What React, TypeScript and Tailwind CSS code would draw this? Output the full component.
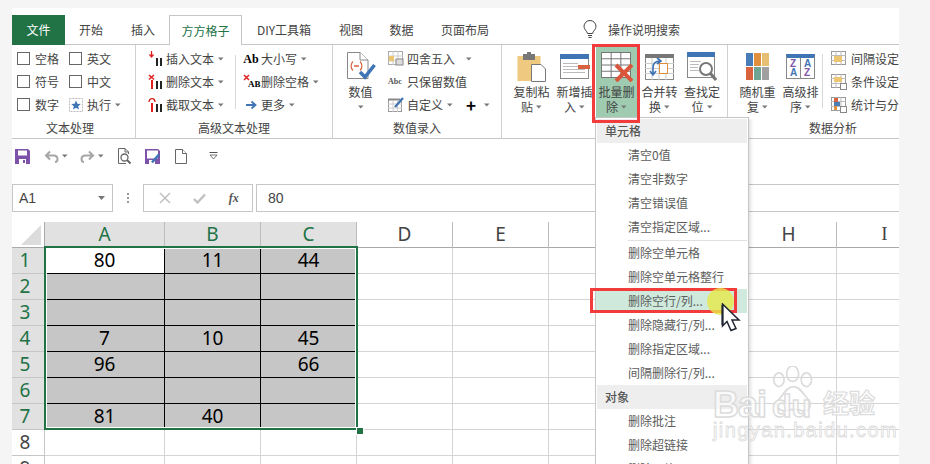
import React from "react";

const CJK = "font-['Noto_Sans_CJK_SC','Noto_Sans',sans-serif]";

function Caret({ className = "" }: { className?: string }) {
  return (
    <svg width="6" height="4" viewBox="0 0 6 4" className={`inline-block shrink-0 ${className}`}>
      <path d="M0 0.5H5.5L2.75 3.5Z" fill="#777" />
    </svg>
  );
}

function Check({ label, mr = "" }: { label: string; mr?: string }) {
  return (
    <div className={`flex items-center h-[23px] w-[52px] ${mr}`}>
      <span className="w-[13px] h-[13px] border border-[#666] mr-[5px] bg-white shrink-0" />
      <span>{label}</span>
    </div>
  );
}

function Bars({ color = "#000" }: { color?: string }) {
  return (
    <>
      <rect x="9" y="7" width="2" height="8" fill="#222" />
      <rect x="13" y="7" width="2" height="8" fill="#222" />
      <rect x="4" y="6" width="2" height="9" fill={color} />
    </>
  );
}

function SmallRow({ icon, label, caret = true, gap = "ml-[3px]" }: { icon: React.ReactNode; label: string; caret?: boolean; gap?: string }) {
  return (
    <div className="flex items-center h-[23px]">
      <span className="w-[16px] h-[16px] flex items-center justify-center shrink-0">{icon}</span>
      <span className={`${gap} whitespace-nowrap`}>{label}</span>
      {caret && <Caret className="ml-[4px]" />}
    </div>
  );
}

function Large({ icon, l1, l2, w = "w-[43px]", active = false }: { icon: React.ReactNode; l1: string; l2: string; w?: string; active?: boolean }) {
  return (
    <div className={`${w} flex flex-col items-center pt-[6px] h-[73px] ${active ? "bg-[#9fcbb0]" : ""}`}>
      <div className="h-[31px] w-[32px] flex items-center justify-center">{icon}</div>
      <div className="leading-[15px] mt-[2px] whitespace-nowrap text-center">{l1}</div>
      <div className="leading-[15px] flex items-center justify-center gap-[3px] h-[15px]">
        {l2}
        <Caret />
      </div>
    </div>
  );
}

function Group({ width, label, children, sep = true, labelClass = "" }: { width: string; label: string; children: React.ReactNode; sep?: boolean; labelClass?: string }) {
  return (
    <div className={`${width} shrink-0 h-full flex flex-col relative ${sep ? "border-r border-[#d0d0d0]" : ""}`}>
      <div className="flex-1 flex min-h-0">{children}</div>
      <div className={`h-[20px] leading-[20px] text-center pb-[1px] text-[#444] ${labelClass}`}>{label}</div>
    </div>
  );
}

const GridLines = ({ x, y, w, h, stroke = "#8a8a8a" }: { x: number; y: number; w: number; h: number; stroke?: string }) => {
  const cw = w / 3;
  const ch = h / 4;
  return (
    <g stroke={stroke} strokeWidth="1" fill="none">
      <rect x={x + 0.5} y={y + 0.5} width={w} height={h} />
      {[1, 2].map((i) => (
        <path key={i} d={`M${x + 0.5 + cw * i} ${y}V${y + h}`} />
      ))}
      {[1, 2, 3].map((i) => (
        <path key={i} d={`M${x} ${y + 0.5 + ch * i}H${x + w}`} />
      ))}
    </g>
  );
};

const Tiny = ({ kind }: { kind: number }) => (
  <svg width="16" height="16" viewBox="0 0 16 16">
    <rect x="0.5" y="0.5" width="14" height="13" fill="#fff" stroke="#999" />
    <path d="M0 4.5H15M0 9.5H15M5 0V14M10 0V14" stroke="#bbb" />
    {kind === 0 && <rect x="3" y="5" width="8" height="6" fill="#eec673" />}
    {kind === 1 && <rect x="3" y="3" width="8" height="5" fill="#eec673" />}
    {kind === 2 && (
      <>
        <rect x="3" y="1" width="4" height="4" fill="#d9623f" />
        <rect x="3" y="5" width="6" height="4" fill="#4a7db8" />
        <rect x="3" y="9" width="3" height="4" fill="#e08f3c" />
      </>
    )}
    {kind > 0 && <rect x="9.5" y="9.5" width="6" height="6" fill="#fff" stroke="#888" />}
  </svg>
);

const rows = [
  ["80", "11", "44"],
  ["", "", ""],
  ["", "", ""],
  ["7", "10", "45"],
  ["96", "", "66"],
  ["", "", ""],
  ["81", "40", ""],
];

const menu1 = ["清空0值", "清空非数字", "清空错误值", "清空指定区域..."];
const menu2 = ["删除空单元格", "删除空单元格整行", "删除空行/列...", "删除隐藏行/列...", "删除指定区域...", "间隔删除行/列..."];
const menu3 = ["删除批注", "删除超链接", "删除图片"];

function MenuItem({ t, on = false }: { t: string; on?: boolean }) {
  return (
    <div className={`h-[24px] leading-[24px] pl-[32px] mr-px whitespace-nowrap text-[#5c5c5c] ${on ? "bg-[#cfeadd]" : ""}`}>{t}</div>
  );
}

export default function App() {
  return (
    <div className={`w-[930px] h-[464px] bg-[#f5f5f5] pl-[12px] pt-[8px] overflow-hidden text-[12px] text-[#444] ${CJK}`}>
      <div className="relative w-[887px] h-[456px] bg-white overflow-hidden">
        {/* tabs */}
        <div className="h-[37px] pt-[7px] flex items-stretch border-b border-[#c6c6c6] text-[12px]">
          <div className="w-[53px] bg-[#217346] text-white flex items-center justify-center -mb-[1px]">文件</div>
          <div className="w-[52px] flex items-center justify-center">开始</div>
          <div className="w-[52px] flex items-center justify-center">插入</div>
          <div className="w-[73px] -mb-[1px] bg-white border border-b-0 border-[#c6c6c6] text-[#217346] flex items-center justify-center">方方格子</div>
          <div className="w-[84px] flex items-center justify-center">DIY工具箱</div>
          <div className="w-[50px] flex items-center justify-center">视图</div>
          <div className="w-[51px] flex items-center justify-center">数据</div>
          <div className="w-[76px] flex items-center justify-center">页面布局</div>
          <div className="ml-[79px] flex items-center">
            <svg width="16" height="19" viewBox="0 0 16 19" fill="none" stroke="#444">
              <path d="M5.5 13.5C5 11 2 9.5 2 6.5a6 6 0 0 1 12 0c0 3-3 4.500-3.500 7Z" />
              <path d="M6 15.500H10M6.500 17.500H9.500" />
            </svg>
            <span className="ml-[10px]">操作说明搜索</span>
          </div>
        </div>

        {/* ribbon */}
        <div className="h-[94px] flex border-b border-[#c6c6c6]">
          <Group width="w-[124px]" label="文本处理" labelClass="pr-[7px]">
            <div className="pl-[5px] pt-[2px] flex">
              <div>
                <Check label="空格" />
                <Check label="符号" />
                <Check label="数字" />
              </div>
              <div>
                <Check label="英文" />
                <Check label="中文" />
                <div className="flex items-center h-[23px]">
                  <svg width="14" height="14" viewBox="0 0 14 14" className="mr-[4px]">
                    <rect x="0.500" y="0.500" width="13" height="13" fill="#fff" stroke="#bbb" strokeDasharray="2 1" />
                    <path d="M7 2.500L8.400 5.700L11.800 6L9.200 8.200L10 11.500L7 9.800L4 11.500L4.800 8.200L2.200 6L5.600 5.700Z" fill="#3f74b5" />
                  </svg>
                  <span>执行</span>
                  <Caret className="ml-[4px]" />
                </div>
              </div>
            </div>
          </Group>
          <Group width="w-[197px]" label="高级文本处理">
            <div className="pl-[11px] pt-[2px] flex">
              <div className="w-[88px]">
                <SmallRow
                  label="插入文本"
                  icon={
                    <svg width="16" height="16" viewBox="0 0 16 16">
                      <path d="M4.500 0V5M2.500 3.500L4.500 6L6.500 3.500" stroke="#e02020" fill="none" strokeWidth="1.300" />
                      <rect x="9" y="7" width="2" height="8" fill="#222" />
                      <rect x="13" y="7" width="2" height="8" fill="#222" />
                    </svg>
                  }
                />
                <SmallRow
                  label="删除文本"
                  icon={
                    <svg width="16" height="16" viewBox="0 0 16 16">
                      <path d="M2 1L7 5.500M7 1L2 5.500" stroke="#e02020" strokeWidth="1.500" />
                      <Bars color="#e02020" />
                    </svg>
                  }
                />
                <SmallRow
                  label="截取文本"
                  icon={
                    <svg width="16" height="16" viewBox="0 0 16 16">
                      <path d="M2 5C2 0.500 8 0.500 8 5" stroke="#e02020" fill="none" strokeWidth="1.300" />
                      <Bars color="#e02020" />
                    </svg>
                  }
                />
              </div>
              <div className="w-px h-[54px] mt-[8px] bg-[#d8d8d8]" />
              <div className="ml-[7px]">
                <SmallRow
                  label="大小写"
                  gap="ml-[2px]"
                  icon={<span className="font-['Liberation_Serif',serif] font-bold text-[12px] text-black leading-none">Ab</span>}
                />
                <SmallRow
                  label="删除空格"
                  gap="ml-[2px]"
                  icon={
                    <span className="relative w-[16px] h-[16px] block">
                      <svg width="7" height="7" viewBox="0 0 7 7" className="absolute left-0 top-0">
                        <path d="M1 1L6 6M6 1L1 6" stroke="#e02020" strokeWidth="1.500" />
                      </svg>
                      <span className="absolute left-[5px] top-[6px] font-['Liberation_Serif',serif] font-bold text-[9px] text-black leading-none">AB</span>
                    </span>
                  }
                />
                <SmallRow
                  label="更多"
                  gap="ml-[2px]"
                  icon={
                    <svg width="12" height="10" viewBox="0 0 12 10">
                      <path d="M1 5H10M6.500 1.500L10.500 5L6.500 8.500" stroke="#3f74b5" strokeWidth="1.800" fill="none" />
                    </svg>
                  }
                />
              </div>
            </div>
          </Group>
          <Group width="w-[169px]" label="数值录入">
            <div className="flex pt-[2px]">
              <div className="w-[55px] flex flex-col items-center pt-[4px]">
                <svg width="30" height="30" viewBox="0 0 30 30">
                  <path d="M1.500 1.500H14L22 9V27.500H1.500Z" fill="#fff" stroke="#888" />
                  <path d="M14 1.500V9H22" fill="#fff" stroke="#888" />
                  <path d="M7 10.500C4.500 13 4.500 17 7 19.500M14 10.500C16.500 13 16.500 17 14 19.500" stroke="#d9623f" fill="none" strokeWidth="1.200" />
                  <path d="M8 15H13" stroke="#d9623f" strokeWidth="1.500" />
                  <path d="M14 21L19 26L28.500 14" stroke="#3f74b5" strokeWidth="3.500" fill="none" />
                </svg>
                <div className="mt-[3px] leading-[15px]">数值</div>
                <Caret className="mt-[6px]" />
              </div>
              <div>
                <div className="flex items-center h-[23px]">
                  <svg width="16" height="15" viewBox="0 0 16 15">
                    <rect x="0.500" y="0.500" width="14" height="13" fill="#fff" stroke="#aaa" />
                    <path d="M5 0V14M10 0V14M0 5H15M0 10H15" stroke="#ccc" />
                    <rect x="1" y="5" width="5" height="5" fill="#eec673" />
                    <rect x="8" y="8" width="7" height="6" fill="#ddd" stroke="#888" />
                  </svg>
                  <span className="ml-[3px]">四舍五入</span>
                  <Caret className="ml-[11px]" />
                </div>
                <div className="flex items-center h-[23px]">
                  <span className="w-[16px] font-['Liberation_Serif',serif] font-bold text-[8px] leading-none text-[#555] whitespace-nowrap">Abc</span>
                  <span className="ml-[3px]">只保留数值</span>
                </div>
                <div className="flex items-center h-[23px]">
                  <svg width="16" height="15" viewBox="0 0 16 15">
                    <rect x="0.500" y="2.500" width="13" height="12" fill="#fff" stroke="#999" />
                    <path d="M0 2.500H12" stroke="#888" strokeWidth="2" />
                    <path d="M5 3V15M9.500 3V15M0 7H14M0 11H14" stroke="#ccc" />
                    <path d="M7 10L15 1" stroke="#3f74b5" strokeWidth="2.200" />
                  </svg>
                  <span className="ml-[3px]">自定义</span>
                  <Caret className="ml-[4px]" />
                  <span className="ml-[13px] text-black font-bold text-[17px] leading-none">+</span>
                  <Caret className="ml-[8px]" />
                </div>
              </div>
            </div>
          </Group>
          <Group width="w-[226px]" label="">
            <div className="flex pl-[8px]">
              <Large
                l1="复制粘"
                l2="贴"
                icon={
                  <svg width="30" height="30" viewBox="0 0 30 30">
                    <rect x="0.500" y="4" width="23" height="25" fill="#efc980" />
                    <rect x="6" y="2" width="12" height="6" fill="#777" />
                    <rect x="10" y="0" width="4" height="4" fill="#777" />
                    <path d="M14.500 12.500H24L28.500 17V29.500H14.500Z" fill="#fff" stroke="#777" />
                  </svg>
                }
              />
              <Large
                l1="新增插"
                l2="入"
                icon={
                  <svg width="30" height="26" viewBox="0 0 30 26">
                    <rect x="0.500" y="0.500" width="28" height="24" fill="#fff" stroke="#888" />
                    <rect x="0" y="0" width="29" height="5" fill="#3f74b5" />
                    <path d="M3 9.500H18M3 12.500H18M3 15.500H25M3 18.500H25" stroke="#bbb" />
                    <rect x="18" y="11" width="12" height="4" fill="#d9623f" />
                  </svg>
                }
              />
              <Large
                active
                w="w-[41px]"
                l1="批量删"
                l2="除"
                icon={
                  <svg width="32" height="30" viewBox="0 0 32 30">
                    <rect x="0" y="0" width="30" height="26" fill="#fff" />
                    <GridLines x={0} y={0} w={29} h={25} stroke="#777" />
                    <path d="M15 13L31 29M31 13L15 29" stroke="#d9563a" strokeWidth="4" />
                  </svg>
                }
              />
              <div className="w-[1px]" />
              <Large
                l1="合并转"
                l2="换"
                icon={
                  <svg width="30" height="26" viewBox="0 0 30 26">
                    <rect x="0.500" y="0.500" width="28" height="25" fill="#fff" stroke="#888" />
                    <rect x="0" y="0" width="29" height="4" fill="#777" />
                    <path d="M0 9.500H29M0 14.500H29M0 19.500H29M7 4V26M14 4V26M21 4V26" stroke="#ccc" />
                    <rect x="14.500" y="9.500" width="8" height="10" fill="#fff" stroke="#e08f3c" />
                    <path d="M15 7C10 7 8 10 8 14M8 20C8 18 8 16 8 14M5 17L8 21L11 17M12 4L16 7L12 10" stroke="#3f74b5" strokeWidth="1.600" fill="none" />
                  </svg>
                }
              />
              <Large
                w="w-[42px]"
                l1="查找定"
                l2="位"
                icon={
                  <svg width="30" height="30" viewBox="0 0 30 30">
                    <rect x="0.500" y="0.500" width="27" height="25" fill="#fff" stroke="#888" />
                    <rect x="0" y="0" width="28" height="5" fill="#3f74b5" />
                    <path d="M3 9.500H14M3 12.500H12M3 15.500H11M3 18.500H12" stroke="#bbb" />
                    <circle cx="19" cy="17" r="6" fill="#fff" stroke="#777" strokeWidth="2" />
                    <path d="M23.500 21.500L29 28" stroke="#777" strokeWidth="3" />
                  </svg>
                }
              />
            </div>
          </Group>
          <Group width="w-[210px]" label="数据分析" sep={false}>
            <div className="flex pl-[8px]">
              <Large
                l1="随机重"
                l2="复"
                icon={
                  <svg width="24" height="27" viewBox="0 0 24 27">
                    <rect x="0" y="0" width="7" height="13" fill="#4a7db8" />
                    <rect x="8" y="0" width="7" height="13" fill="#e08f3c" />
                    <rect x="16" y="0" width="7" height="13" fill="#e7bf72" />
                    <rect x="0" y="14" width="7" height="13" fill="#d9623f" />
                    <rect x="8" y="14" width="7" height="13" fill="#70a596" />
                    <rect x="16" y="14" width="7" height="13" fill="#a0a0a0" />
                  </svg>
                }
              />
              <Large
                l1="高级排"
                l2="序"
                icon={
                  <span className="relative block w-[29px] h-[25px] border border-[#888] border-t-[4px] border-t-[#3f74b5] leading-none">
                    <span className="absolute left-[13px] top-0 bottom-0 w-px bg-[#888]" />
                    <span className="absolute left-[3px] top-[1px] text-[10px] font-['Liberation_Sans',sans-serif] text-[#7e57a8] font-semibold">Z</span>
                    <span className="absolute left-[3px] top-[10px] text-[10px] font-['Liberation_Sans',sans-serif] text-[#3f74b5] font-semibold">A</span>
                    <span className="absolute left-[17px] top-[1px] text-[10px] font-['Liberation_Sans',sans-serif] text-[#3f74b5] font-semibold">A</span>
                    <span className="absolute left-[17px] top-[10px] text-[10px] font-['Liberation_Sans',sans-serif] text-[#7e57a8] font-semibold">Z</span>
                  </span>
                }
              />
              <div className="w-px h-[54px] mt-[9px] bg-[#d8d8d8]" />
              <div className="pl-[8px] pt-[2px]">
                <SmallRow caret={false} gap="ml-[4px]" label="间隔设定" icon={<Tiny kind={0} />} />
                <SmallRow caret={false} gap="ml-[4px]" label="条件设定" icon={<Tiny kind={1} />} />
                <SmallRow caret={false} gap="ml-[4px]" label="统计与分析" icon={<Tiny kind={2} />} />
              </div>
            </div>
          </Group>
        </div>

        {/* quick access */}
        <div className="h-[34px] flex items-center pl-[3px]">
          <svg width="15" height="15" viewBox="0 0 15 15">
            <path d="M0 0H13L15 2V15H0Z" fill="#7d52a8" />
            <rect x="3" y="1.500" width="9" height="5" fill="#fff" />
            <rect x="4" y="10" width="7" height="5" fill="#fff" />
            <rect x="8" y="11" width="2" height="3" fill="#7d52a8" />
          </svg>
          <svg width="15" height="13" viewBox="0 0 15 13" className="ml-[14px]" fill="none" stroke="#a6a6a6" strokeWidth="2">
            <path d="M3 5.500H9.500C12 5.500 13.500 7 13.500 9C13.500 10.500 12.500 12 11 12M6 1.500L2 5.500L6 9.500" />
          </svg>
          <Caret className="ml-[3px]" />
          <svg width="15" height="13" viewBox="0 0 15 13" className="ml-[12px]" fill="none" stroke="#a6a6a6" strokeWidth="2">
            <path d="M12 5.500H5.500C3 5.500 1.500 7 1.500 9C1.500 10.500 2.500 12 4 12M9 1.500L13 5.500L9 9.500" />
          </svg>
          <Caret className="ml-[3px]" />
          <svg width="15" height="17" viewBox="0 0 15 17" className="ml-[13px]" fill="none" stroke="#666">
            <path d="M9 15.500H1.500V0.500H8L11.500 4V6M8 0.500V4H11.500" />
            <circle cx="7.500" cy="9.500" r="3.500" strokeWidth="1.300" />
            <path d="M10 12L13.500 15.500" strokeWidth="2" />
          </svg>
          <svg width="16" height="15" viewBox="0 0 16 15" className="ml-[13px]">
            <path d="M0 0H13L15 2V15H0Z" fill="#7d52a8" />
            <rect x="2" y="1.500" width="11" height="8" fill="#fff" />
            <rect x="4" y="11" width="6" height="4" fill="#fff" />
            <path d="M7 13.500L14 5.500" stroke="#3f74b5" strokeWidth="2.500" />
          </svg>
          <svg width="12" height="15" viewBox="0 0 12 15" className="ml-[14px]" fill="#fff" stroke="#666">
            <path d="M0.500 0.500H7.500L11.500 4.500V14.500H0.500Z" />
            <path d="M7.500 0.500V4.500H11.500" />
          </svg>
          <svg width="9" height="8" viewBox="0 0 9 8" className="ml-[22px]">
            <path d="M0.500 0.500H8.500" stroke="#555" />
            <path d="M1 3H8L4.500 7Z" fill="#fff" stroke="#555" strokeWidth="0.800" />
          </svg>
        </div>

        {/* formula bar */}
        <div className="h-[28px] mt-[11px] flex text-[14px] font-['Liberation_Sans',sans-serif] text-[#444]">
          <div className="w-[101px] border border-[#c6c6c6] flex items-center justify-between pl-[6px] pr-[6px]">
            <span>A1</span>
            <svg width="8" height="5" viewBox="0 0 8 5">
              <path d="M0 0H7L3.500 4Z" fill="#777" />
            </svg>
          </div>
          <div className="w-[30px] flex flex-col items-center justify-center gap-[2px]">
            <span className="w-[2px] h-[2px] bg-[#999]" />
            <span className="w-[2px] h-[2px] bg-[#999]" />
            <span className="w-[2px] h-[2px] bg-[#999]" />
          </div>
          <div className="w-[110px] border border-[#c6c6c6] flex items-center justify-around pl-[4px] pr-[2px]">
            <svg width="12" height="12" viewBox="0 0 12 12">
              <path d="M1 1L11 11M11 1L1 11" stroke="#c0c0c0" strokeWidth="1.500" />
            </svg>
            <svg width="13" height="11" viewBox="0 0 13 11">
              <path d="M1 6L4.500 9.500L12 1.500" stroke="#c0c0c0" strokeWidth="2.400" fill="none" />
            </svg>
            <span className="font-['Liberation_Serif',serif] italic font-bold text-[12px] text-[#555]">fx</span>
          </div>
          <div className="w-[3px]" />
          <div className="flex-1 border border-r-0 border-[#c6c6c6] flex items-center pl-[11px]">80</div>
        </div>

        {/* sheet */}
        <div className="mt-[10px] font-['Noto_Sans',sans-serif] text-[19px] leading-[24px] text-[#222]">
          <div className="flex h-[26px]">
            <div className="w-[33px] shrink-0 bg-white relative border-r border-[#aaa] border-b border-b-[#aaa]">
              <svg width="20" height="20" viewBox="0 0 20 20" className="absolute right-[3px] bottom-[2px]">
                <path d="M20 0V20H0Z" fill="#dcdcdc" />
              </svg>
            </div>
            {["A", "B", "C", "D", "E", "F", "G", "H", "I"].map((c, i) => (
              <div
                key={c}
                className={`shrink-0 text-center border-r border-[#bdbdbd] border-b border-b-[#aaa] ${i === 0 ? "w-[120px]" : "w-[96px]"} ${i < 3 ? "bg-[#e1e1e1] text-[#217346]" : "bg-white text-[#444]"} ${c === "I" ? "font-['Liberation_Serif',serif]" : ""} ${c === "F" ? "pl-[10px]" : ""}`}
              >
                {c}
              </div>
            ))}
          </div>
          {Array.from({ length: 9 }).map((_, r) => (
            <div key={r} className="flex h-[26px]">
              <div className={`w-[33px] shrink-0 text-center pr-[6px] border-r border-[#aaa] border-b border-[#c6c6c6] ${r < 7 ? "bg-[#e1e1e1] text-[#217346]" : "bg-white text-[#444]"}`}>{r + 1}</div>
              {Array.from({ length: 9 }).map((__, c) => {
                const sel = r < 7 && c < 3;
                const white = r === 0 && c === 0;
                return (
                  <div
                    key={c}
                    className={`shrink-0 text-center text-black border-r border-b ${c === 0 ? "w-[120px]" : "w-[96px]"} ${sel ? (white ? "bg-white border-black" : "bg-[#c6c6c6] border-black") : "border-[#d4d4d4]"}`}
                  >
                    {sel ? rows[r][c] : ""}
                  </div>
                );
              })}
            </div>
          ))}
        </div>

        {/* selection overlay */}
        <div className="absolute left-[32px] top-[238px] w-[314px] h-[184px] border-2 border-[#217346] outline outline-1 -outline-offset-3 outline-white pointer-events-none" />
        <div className="absolute left-[344px] top-[419px] w-[6px] h-[6px] bg-[#217346] border border-white box-content" />

        {/* menu */}
        <div className="absolute left-[583px] top-[109px] w-[154px] h-[350px] bg-white border border-[#c6c6c6] shadow-[2px_2px_3px_rgba(0,0,0,0.12)] pt-[1px]">
          <div className="h-[24px] leading-[24px] mx-px pl-[8px] bg-[#eeeeee] text-[#555] font-medium">单元格</div>
          {menu1.map((t) => (
            <MenuItem key={t} t={t} />
          ))}
          <div className="h-[2px] border-b border-[#e0e0e0] ml-[32px] mr-[1px]" />
          {menu2.map((t, i) => (
            <MenuItem key={t} t={t} on={i === 2} />
          ))}
          <div className="h-[24px] leading-[24px] mx-px pl-[8px] bg-[#eeeeee] text-[#555] font-medium">对象</div>
          {menu3.map((t) => (
            <MenuItem key={t} t={t} />
          ))}
        </div>

        {/* watermark */}
        <div className="absolute left-[701px] top-[358px] w-[166px] h-[98px] text-white/70 pointer-events-none">
          <svg width="47" height="48" viewBox="0 0 52 56" className="absolute left-[57px] top-0" fill="none" stroke="#dcdcdc" strokeWidth="2">
            <ellipse cx="25" cy="9" rx="7" ry="9" />
            <ellipse cx="9" cy="16" rx="6" ry="8" />
            <ellipse cx="41" cy="16" rx="6" ry="8" />
            <path d="M26 24C18 24 14 34 8 40C4 46 10 54 18 52C24 50 30 50 36 52C44 54 48 46 44 40C38 34 34 24 26 24Z" />
          </svg>
          <div className="absolute left-0 top-[17px] font-['Liberation_Sans',sans-serif] font-bold text-[36px] leading-[44px] tracking-[-1px] [-webkit-text-stroke:1.500px_#dcdcdc]">Bai</div>
          <div className="absolute left-[59px] top-[20px] font-['Liberation_Sans',sans-serif] font-bold text-[32px] leading-[40px] [-webkit-text-stroke:1.500px_#dcdcdc]">du</div>
          <div className="absolute left-[110px] top-[16px] font-bold text-[26px] leading-[40px] whitespace-nowrap [-webkit-text-stroke:1.200px_#dcdcdc]">经验</div>
          <div className="absolute left-0 top-[52px] font-['Liberation_Sans',sans-serif] text-[20px] leading-[24px] tracking-[1.400px] whitespace-nowrap [-webkit-text-stroke:0.800px_#dcdcdc]">jingyan.baidu.com</div>
        </div>

        {/* highlights */}
        <div className="absolute left-[580px] top-[36px] w-[48px] h-[79px] border-[3px] border-[#f23c3c]" />
        <div className="absolute left-[578px] top-[280px] w-[147px] h-[25px] border-[3px] border-[#f23c3c]" />
        <div className="absolute left-[695px] top-[280px] w-[27px] h-[27px] rounded-full bg-[#e6e84a] opacity-80" />
        <svg width="20" height="32" viewBox="0 0 20 32" className="absolute left-[709px] top-[295px]">
          <path d="M1.500 1V23L6 18.500L10 27.500L15 25.500L11 17H18Z" fill="#fff" stroke="#1f2430" strokeWidth="1.500" />
          <path d="M1.500 2V22" stroke="#1f2430" strokeWidth="2" />
        </svg>
      </div>
    </div>
  );
}
